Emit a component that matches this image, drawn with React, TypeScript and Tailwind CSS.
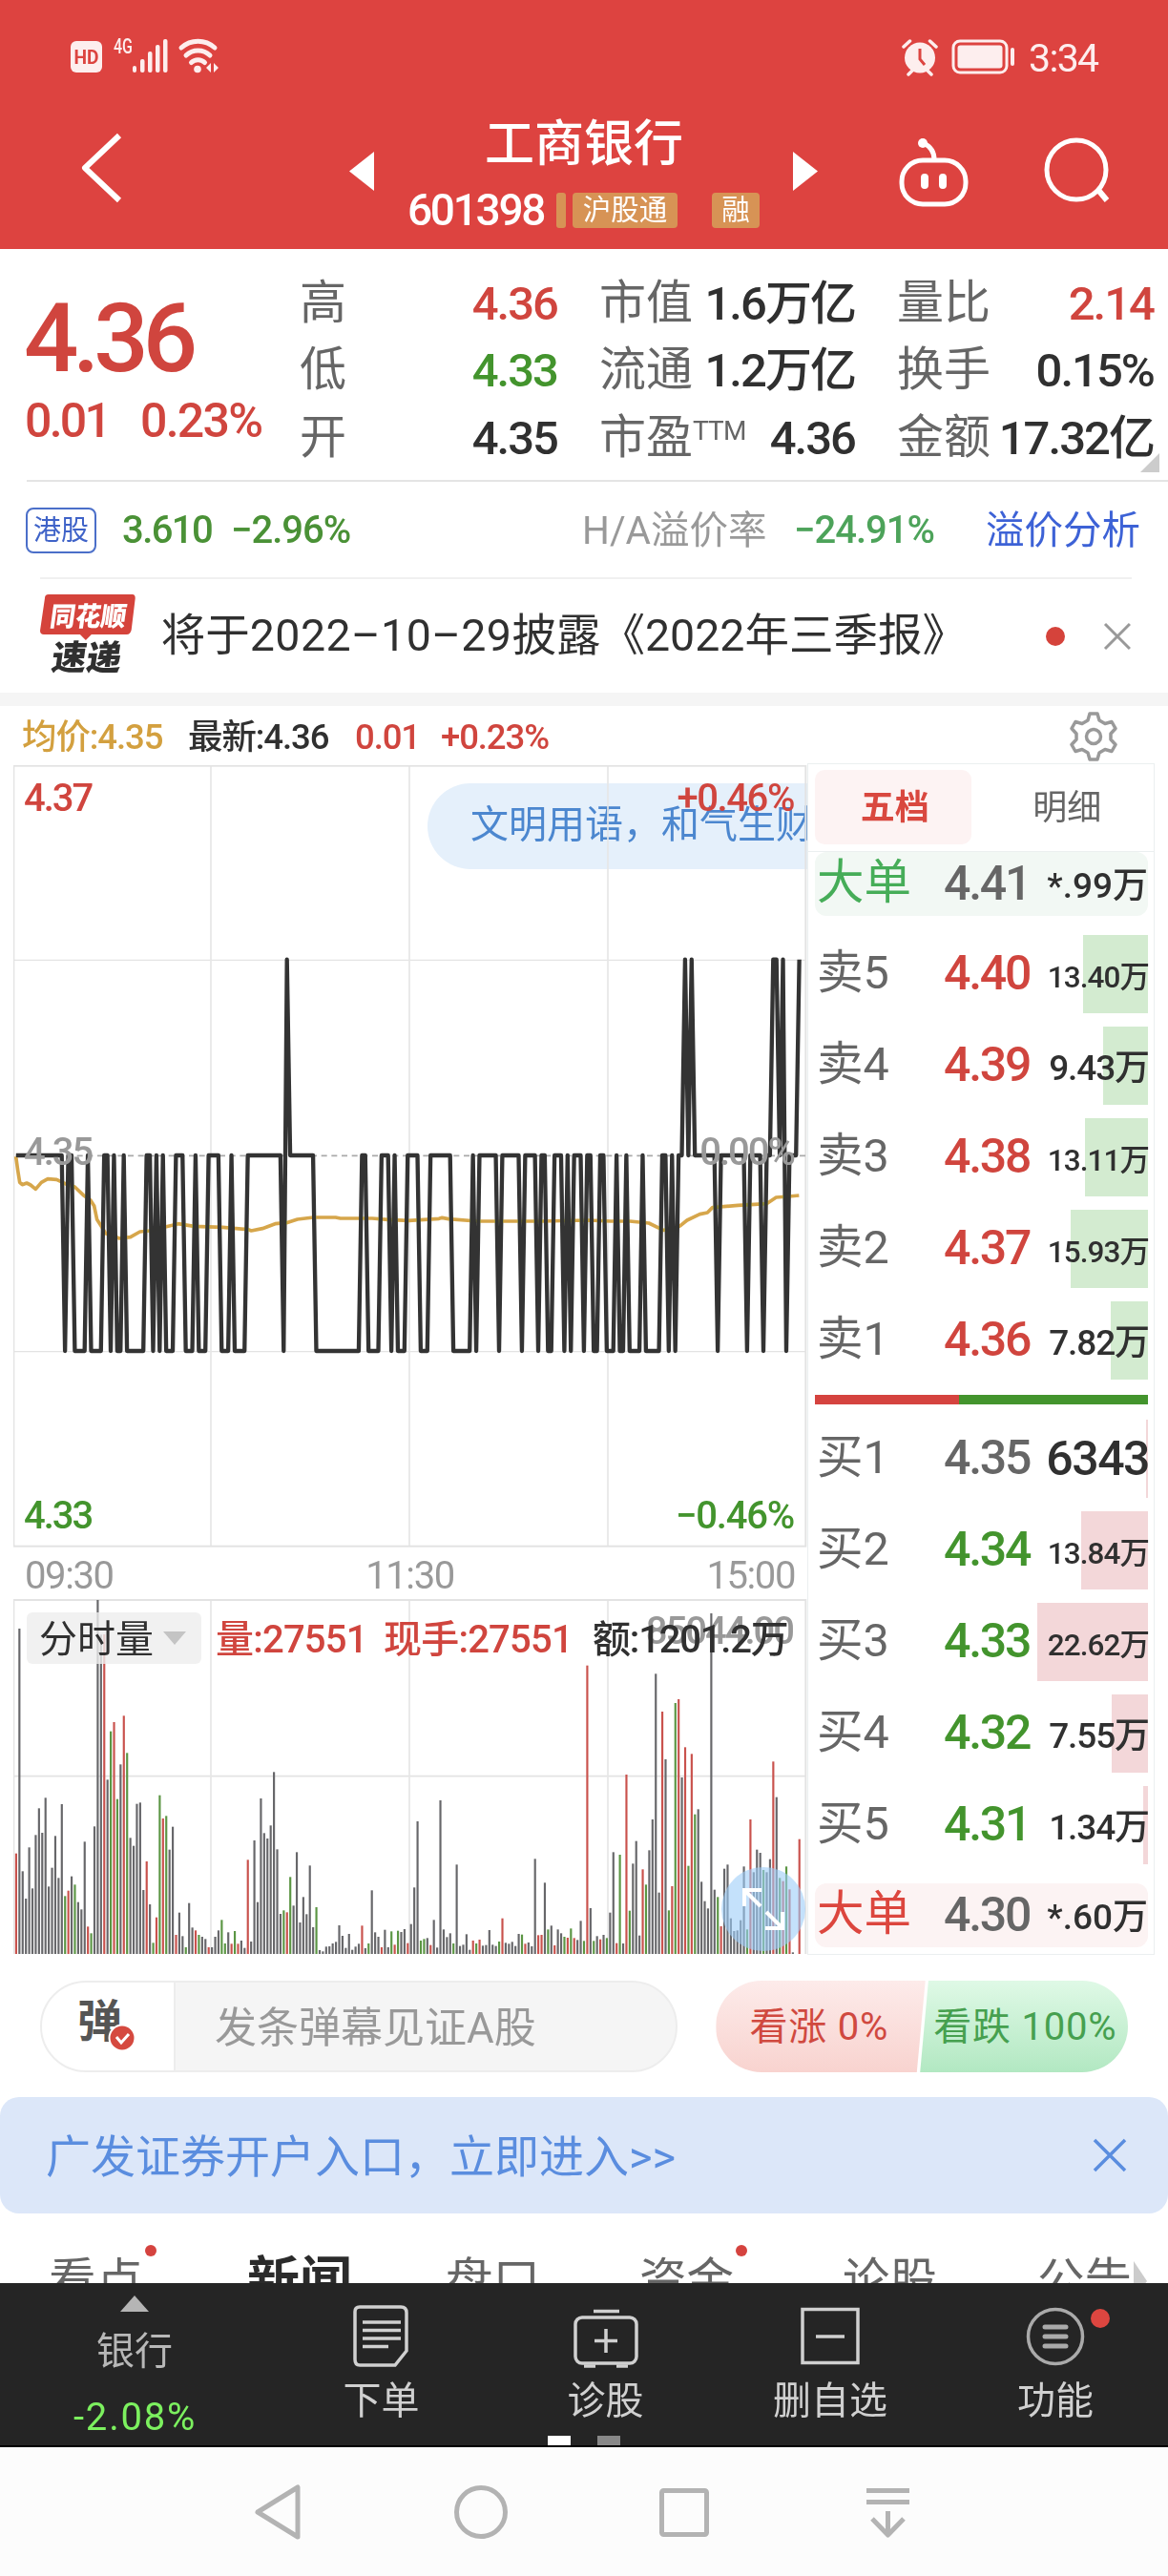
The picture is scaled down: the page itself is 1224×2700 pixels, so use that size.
import type { ReactNode } from 'react';
import clsx from 'clsx';

const RED = 'text-[#d0453e]';
const GREEN = 'text-[#43942d]';
const DARK = 'text-[#303030]';

type Stat = { label: string; sup?: string; value: string; color: string };

const STATS: Stat[][] = [
  [
    { label: '高', value: '4.36', color: RED },
    { label: '低', value: '4.33', color: GREEN },
    { label: '开', value: '4.35', color: DARK },
  ],
  [
    { label: '市值', value: '1.6万亿', color: DARK },
    { label: '流通', value: '1.2万亿', color: DARK },
    { label: '市盈', sup: 'TTM', value: '4.36', color: DARK },
  ],
  [
    { label: '量比', value: '2.14', color: RED },
    { label: '换手', value: '0.15%', color: DARK },
    { label: '金额', value: '17.32亿', color: DARK },
  ],
];

type Order = { label: string; price: string; amount: string; bar: number; color: string };

const SELLS: Order[] = [
  { label: '卖5', price: '4.40', amount: '13.40万', bar: 68, color: RED },
  { label: '卖4', price: '4.39', amount: '9.43万', bar: 47, color: RED },
  { label: '卖3', price: '4.38', amount: '13.11万', bar: 66, color: RED },
  { label: '卖2', price: '4.37', amount: '15.93万', bar: 81, color: RED },
  { label: '卖1', price: '4.36', amount: '7.82万', bar: 39, color: RED },
];

const BUYS: Order[] = [
  { label: '买1', price: '4.35', amount: '6343', bar: 2, color: 'text-[#666]' },
  { label: '买2', price: '4.34', amount: '13.84万', bar: 70, color: GREEN },
  { label: '买3', price: '4.33', amount: '22.62万', bar: 116, color: GREEN },
  { label: '买4', price: '4.32', amount: '7.55万', bar: 38, color: GREEN },
  { label: '买5', price: '4.31', amount: '1.34万', bar: 5, color: GREEN },
];

// price level and the number of minutes it was held: H 4.36, M 4.35, L 4.34
const PRICE_RUNS =
  'M15 L1 M2 L4 M1 L4 M2 L1 M1 L2 M1 L6 M2 L1 M1 L1 M1 L3 M3 L3 M1 L3 M4 L3 M1 L4 M11 L1 H1 M8 L14 M2 L4 M3 L1 M1 L3 ' +
  'M4 L3 M7 L6 M1 L1 M6 L1 M6 L1 M4 L1 M2 L2 M3 L1 M1 L1 M3 L1 M2 L2 M2 L3 M1 L2 M1 L4 M1 L5 M2 L1 M1 L1 M2 H1 M1 H1 ' +
  'M7 L1 M8 L1 M4 L1 M2 H2 M1 H1 L1 M3 H1';

const AVERAGE =
  '50,757 56,800 62,838 70,845 84,840 96,846 112,859 130,838 150,827 178,829 205,842 235,852 262,878 284,893 296,912 305,955 318,975 332,998 ' +
  '360,1008 375,1014 410,1010 440,993 470,990 520,978 560,968 610,976 700,979 780,986 790,990 825,983 865,968 905,964 935,954 985,948 1055,948 ' +
  '1070,951 1170,951 1220,955 1285,958 1380,952 1390,949 1410,953 1500,960 1700,960 1850,957 1920,960 1980,960 2040,966 2085,988 2120,985 ' +
  '2140,973 2160,957 2200,938 2224,933 2240,917 2320,910 2410,905 2440,885 2480,882 2512,879';

// one bar a minute: colour, then the top of the bar (804 is the base line)
const VOLUMES =
  'r488 k-219 k544 k630 k469 k598 k430 k346 k423 k313 k592 k533 k433 k565 k333 g622 r605 k560 g586 k641 k664 k451 r718 g739 k403 k-309 k-200 ' +
  'r-201 k256 g104 r75 g317 k208 r55 g172 k439 k464 k332 k328 k603 r513 k648 g769 r689 g305 r378 g370 k476 k404 r744 k674 k748 g783 k644 k721 ' +
  'r730 g744 k750 k757 r783 k783 k750 k730 g697 g771 k736 r772 g732 r772 k762 k785 r508 k765 k447 k641 k315 k424 k441 k400 k232 k475 k678 g667 ' +
  'r673 g562 k652 k484 k705 k625 k679 k526 k720 g657 k792 k796 k781 k780 k771 k766 k714 k747 k785 k741 k791 k781 k772 r715 k786 g771 k604 k736 ' +
  'k750 r783 k728 k783 g733 r775 g731 k735 k726 r770 k710 k595 k387 g762 g757 k754 r776 k697 k784 k321 k727 k751 k739 g771 k523 k779 k775 k742 ' +
  'k791 r762 g771 r759 k778 k776 k729 k775 k779 g765 r692 k769 k772 k766 k779 k741 g743 r772 k768 k780 k505 r745 r744 k580 g727 k715 r777 k727 ' +
  'k739 g750 r753 g724 r754 k760 k700 g763 r-103 k660 g763 k748 r758 k744 g754 k674 k484 r770 g492 k771 r240 g668 k520 k449 k746 r538 g586 k478 ' +
  'k381 k-77 k611 r42 k192 g667 r591 g15 r3 k249 r154 g527 r175 g365 k349 k577 k638 k661 k-267 k602 g625 r717 k536 k523 k692 k732 k730 k698 k529 ' +
  'g727 r381 k547 k476 k486 g540 k547 k506 r199 k311 g565 r575 g529 r601 k799 k804 r443';

const BAR_FILL: Record<string, string> = { r: '#c9524d', g: '#5b9644', k: '#67676a' };
const LEVEL: Record<string, number> = { H: 137, M: 753, L: 1368 };

const minuteX = (i: number) => 50.5 + i * 10.26;

const pricePoints = PRICE_RUNS.split(' ')
  .flatMap((run) => Array.from({ length: Number(run.slice(1)) }, () => LEVEL[run[0]]))
  .map((y, i) => `${minuteX(i).toFixed(1)},${y}`)
  .join(' ');

function StatusBar() {
  return (
    <div className="h-[120px] flex items-center justify-between pl-[74px] pr-[74px] text-[#fdeeee]">
      <svg width="160" height="44" viewBox="0 0 160 44" fill="currentColor" className="mt-[-1px]">
        <rect x="0" y="5" width="33" height="33" rx="6" />
        <text x="16.5" y="29" fontSize="20" fontWeight="700" textAnchor="middle" fill="#dc4440" fontFamily="Roboto" textLength="26" lengthAdjust="spacingAndGlyphs">HD</text>
        <text x="45" y="18" fontSize="22" fontWeight="500" fontFamily="Roboto" textLength="20" lengthAdjust="spacingAndGlyphs">4G</text>
        <rect x="65" y="31" width="4" height="7" rx="2" />
        <rect x="73" y="24" width="4.5" height="14" rx="2" />
        <rect x="81" y="16" width="4.5" height="22" rx="2" />
        <rect x="89" y="9" width="4.5" height="29" rx="2" />
        <rect x="97" y="3" width="4.5" height="35" rx="2" />
        <g fill="none" stroke="currentColor" strokeWidth="5" strokeLinecap="round">
          <path d="M116 12a26 26 0 0 1 35 0" />
          <path d="M121 20a18 18 0 0 1 25 0" />
          <path d="M126.500 27.500a10 10 0 0 1 14 0" />
        </g>
        <circle cx="133" cy="34.500" r="3.800" />
        <path d="M147 28v10l-5-5zM150 28v10l5-5z" />
      </svg>
      <div className="flex items-center">
        <svg width="38" height="40" viewBox="0 0 38 40" fill="none" stroke="currentColor">
          <circle cx="19" cy="20.500" r="16" fill="currentColor" stroke="none" />
          <path d="M2 9 8.500 3M36 9l-6.500-6M7 38l5-5M31 38l-5-5" strokeWidth="3.500" strokeLinecap="round" />
          <path d="M19 11v11l5 6" stroke="#dc4440" strokeWidth="3" />
        </svg>
        <svg width="68" height="38" viewBox="0 0 68 38" fill="none" stroke="currentColor" className="ml-3.5">
          <rect x="2" y="2" width="56" height="33" rx="7" strokeWidth="3" />
          <rect x="6.500" y="6.500" width="47" height="24" rx="3" fill="currentColor" stroke="none" />
          <path d="M64 11v15" strokeWidth="4" strokeLinecap="round" />
        </svg>
        <span className="ml-[13px] mt-0.5 text-[41px] leading-none tracking-[-0.04em] w-[72px] whitespace-nowrap">3:34</span>
      </div>
    </div>
  );
}

function Header() {
  return (
    <header className="h-[261px] bg-[#dd4340] text-white">
      <StatusBar />
      <div className="h-[141px] flex">
        <svg width="46" height="74" viewBox="0 0 46 74" fill="none" stroke="currentColor" strokeWidth="6" className="ml-[84px] mt-[19px]">
          <path d="M41 3 5 37l36 34" strokeLinejoin="round" />
        </svg>
        <svg width="28" height="42" viewBox="0 0 28 42" fill="currentColor" className="ml-[235px] mt-[39px]">
          <path d="M27 0v41L1 20.500z" />
        </svg>
        <div className="w-[438px] flex flex-col items-center">
          <h1 className="text-[52px] leading-[62px] font-medium mt-px">工商银行</h1>
          <div className="flex items-center mt-[15px] w-[370px]">
            <span className="text-[46px] leading-[44px] font-medium tracking-[-0.05em] w-[156px]">601398</span>
            <span className="w-2.5 h-[37px] rounded-[3px] bg-[#d79355]" />
            <span className="ml-[7px] w-[110px] h-[37px] rounded-[4px] bg-[#d79355] text-[29.500px] leading-[36px] text-center">沪股通</span>
            <span className="ml-9 w-[50px] h-[37px] rounded-[4px] bg-[#d79355] text-[29.500px] leading-[36px] text-center">融</span>
          </div>
        </div>
        <svg width="28" height="42" viewBox="0 0 28 42" fill="currentColor" className="mt-[39px]">
          <path d="M0 0v41l26-20.500z" />
        </svg>
        <svg width="76" height="76" viewBox="0 0 76 76" fill="none" stroke="currentColor" strokeWidth="5" className="ml-[82px] mt-[23px]">
          <rect x="4" y="25" width="67" height="46" rx="22" />
          <path d="M38 24c0-8-3-13-11-17" />
          <circle cx="26" cy="7" r="5" fill="currentColor" stroke="none" />
          <path d="M28 43v8M47 43v8" strokeWidth="8" strokeLinecap="round" />
        </svg>
        <svg width="72" height="72" viewBox="0 0 72 72" fill="none" stroke="currentColor" strokeWidth="5" className="ml-[76px] mt-[23px]">
          <circle cx="35" cy="35" r="31" />
          <path d="m57 55 10 12" strokeWidth="6" />
        </svg>
      </div>
    </header>
  );
}

function Quote() {
  return (
    <section className="h-[242px] flex pt-[21px] relative">
      <div className="w-[315px] pl-[25px] pt-[31px]">
        <div className={clsx('text-[101px] leading-[84px] font-medium tracking-[-0.06em]', RED)}>4.36</div>
        <div className={clsx('flex mt-[14px] text-[50px] leading-[60px] tracking-[-0.035em] font-medium pl-px', RED)}>
          <span className="w-[121px] tracking-[-0.055em]">0.01</span>
          <span>0.23%</span>
        </div>
      </div>
      <div className="flex gap-[43px]">
        {STATS.map((column, i) => (
          <div key={i} className={clsx('flex flex-col', i === 0 ? 'w-[271px]' : i === 1 ? 'w-[269px]' : 'w-[270px]')}>
            {column.map((stat) => (
              <div key={stat.label} className="h-[70.500px] flex items-center justify-between whitespace-nowrap">
                <span className="text-[49px] leading-none text-[#666] -ml-px">
                  {stat.label}
                  {stat.sup && <span className="text-[28px] align-[14px] tracking-[-0.03em]">{stat.sup}</span>}
                </span>
                <span className={clsx('text-[49px] leading-none font-medium tracking-[-0.04em] mr-0.5 pt-0.5', stat.color)}>{stat.value}</span>
              </div>
            ))}
          </div>
        ))}
      </div>
      <svg width="20" height="20" viewBox="0 0 20 20" className="absolute right-[9px] bottom-[8px]">
        <path d="M20 0v20H0z" fill="#ccc" />
      </svg>
    </section>
  );
}

function HkRow() {
  return (
    <div className="h-[102px] ml-7 border-t-2 border-[#e4e4e4] flex items-center text-[40px] leading-none whitespace-nowrap pt-0.5">
      <span className="w-[74px] h-[48px] border-2 border-[#4b6fc9] rounded-[8px] text-[29px] leading-[44px] text-center text-[#3f63c8] -ml-px">港股</span>
      <span className="ml-[27px] w-[114px] font-medium tracking-[-0.04em] text-[#4a9136]">3.610</span>
      <span className="w-[368px] font-medium tracking-[-0.025em] text-[#4a9136]">−2.96%</span>
      <span className="w-[222px] text-[40.500px] text-[#999]">H/A溢价率</span>
      <span className="w-[201px] font-medium tracking-[-0.025em] text-[#4da35a]">−24.91%</span>
      <span className="text-[40.500px] text-[#3d62d6]">溢价分析</span>
    </div>
  );
}

function NewsRow() {
  return (
    <div className="h-[121px] ml-[42px] mr-[38px] border-t-2 border-[#f0f0f0] flex items-center">
      <svg width="102" height="84" viewBox="0 0 102 84" className="-mt-1">
        <path d="M9 0h88q3 0 3 4l-4 33q-1 5-5 5H54l-6 6-6-6H4q-4 0-4-4L5 4q0-4 4-4z" fill="#d5433b" />
        <g transform="skewX(-8)" fontFamily="'Noto Sans CJK SC', sans-serif" fontWeight="900">
          <text x="14" y="33" fontSize="28" fill="#fff" textLength="80" lengthAdjust="spacingAndGlyphs">同花顺</text>
          <text x="22" y="79" fontSize="36" fill="#303030" textLength="73" lengthAdjust="spacingAndGlyphs">速递</text>
        </g>
      </svg>
      <span className={clsx('ml-[25px] text-[46.500px] leading-none whitespace-nowrap w-[926px]', DARK)}>
        将于<span className="tracking-[0.01em]">2022–10–29</span>披露《2022年三季报》
      </span>
      <span className="size-5 rounded-full bg-[#d5433b] ml-1" />
      <svg width="30" height="30" viewBox="0 0 30 30" stroke="#999" strokeWidth="3" className="ml-[40px]">
        <path d="m2 2 26 26M28 2 2 28" />
      </svg>
    </div>
  );
}

function ChartHeader() {
  return (
    <div className="h-[60px] flex items-center pl-[23px] pr-[52px] pt-1.5 text-[36.500px] leading-none tracking-[-0.03em] font-medium whitespace-nowrap">
      <span className="w-[174px] text-[#d3a03f]">均价:4.35</span>
      <span className={clsx('w-[175px]', DARK)}>最新:4.36</span>
      <span className={clsx('w-[90px]', RED)}>0.01</span>
      <span className={RED}>+0.23%</span>
      <svg width="52" height="52" viewBox="0 0 52 52" fill="none" stroke="#999" strokeWidth="3.500" strokeLinejoin="round" className="ml-auto -mt-0.5">
        <path d="M22 2h8l2 7 6 3.500 7-2 4 7-5 5.500v6l5 5.500-4 7-7-2-6 3.500-2 7h-8l-2-7-6-3.500-7 2-4-7 5-5.500v-6L3 17.500l4-7 7 2L20 9z" />
        <circle cx="26" cy="26" r="7.500" />
      </svg>
    </div>
  );
}

function PriceChart() {
  return (
    <div className="relative h-[820px] overflow-hidden text-[40px] leading-none font-medium tracking-[-0.05em]">
      <div className="absolute left-[434px] top-[19px] w-[420px] h-[90px] rounded-l-full bg-[#e5f0fb] pl-[45px] leading-[88px] whitespace-nowrap font-normal tracking-normal text-[#4c87cf]">
        文明用语，和气生财
      </div>
      <span className={clsx('absolute left-[11px] top-[15px]', RED)}>4.37</span>
      <span className={clsx('absolute right-[14px] top-[15px] tracking-[-0.035em]', RED)}>+0.46%</span>
      <svg width="832" height="820" viewBox="42 -474 2496 2460" className="absolute left-0 top-0" fill="none">
        <path d="M42 139h2493M42 1370h2493" stroke="#e3e3e3" strokeWidth="4" />
        <path d="M663-474V1983M1287-474V1983M1911-474V1983" stroke="#e6e6e6" strokeWidth="5" />
        <rect x="43" y="-472" width="2490" height="2454" stroke="#e3e3e3" strokeWidth="6" />
        <path d="M50 754h2484" stroke="#aaa" strokeWidth="5" strokeDasharray="18 14" />
        <polyline points={pricePoints} stroke="#333" strokeWidth="13" strokeLinejoin="round" />
        <polyline points={AVERAGE} stroke="#d09a32" strokeOpacity=".88" strokeWidth="11" strokeLinejoin="round" className="mix-blend-darken" />
      </svg>
      <span className="absolute left-[11px] top-[386px] text-[#999]">4.35</span>
      <span className="absolute right-[14px] top-[386px] text-[#999]">0.00%</span>
      <span className={clsx('absolute left-[11px] bottom-[13px]', GREEN)}>4.33</span>
      <span className={clsx('absolute right-[14px] bottom-[13px] tracking-[-0.03em]', GREEN)}>−0.46%</span>
    </div>
  );
}

function VolumeChart() {
  return (
    <div className="relative h-[372px] overflow-hidden text-[40px] leading-none">
      <svg width="832" height="372" viewBox="42 -312 2496 1116" className="absolute left-0 top-0" fill="none">
        <path d="M42 245h2493" stroke="#e3e3e3" strokeWidth="5" />
        <path d="M663-312V804M1287-312V804M1911-312V804" stroke="#e6e6e6" strokeWidth="5" />
        <path d="M43 804V-309H2533V804" stroke="#e3e3e3" strokeWidth="6" />
        {VOLUMES.split(' ').map((bar, i) => {
          const top = Number(bar.slice(1));
          return <rect key={i} x={minuteX(i) - 3} y={top} width="6.500" height={804 - top} fill={BAR_FILL[bar[0]]} />;
        })}
      </svg>
      <span className="absolute right-[15px] top-[14px] text-[#999] font-medium tracking-[-0.05em]">85044.00</span>
      <div className="absolute left-3.5 top-[14px] h-[54px] flex items-center whitespace-nowrap">
        <span className={clsx('w-[183px] h-[54px] rounded-[6px] bg-[#ededed]/80 flex items-center pl-[13px] pt-1', DARK)}>
          分时量
          <svg width="24" height="14" viewBox="0 0 24 14" className="ml-2.5 -mt-1">
            <path d="M0 0h24L12 14z" fill="#c4c4c4" />
          </svg>
        </span>
        <span className={clsx('ml-[15px] mt-1 w-[176px] font-medium tracking-[-0.02em]', RED)}>量:27551</span>
        <span className={clsx('w-[219px] mt-1 font-medium tracking-[-0.02em]', RED)}>现手:27551</span>
        <span className={clsx('mt-1 font-medium tracking-[-0.03em]', DARK)}>额:1201.2万</span>
      </div>
      <div className="absolute left-[742px] top-[281px] size-[88px] rounded-full bg-[#9dcdf8]/60 grid place-items-center">
        <svg width="46" height="46" viewBox="0 0 46 46" fill="none" stroke="#fff" strokeWidth="4">
          <path d="M3 20V3h18M3 3l17 17M43 26v17H25M43 43 26 26" />
        </svg>
      </div>
    </div>
  );
}

function OrderRow({ order, barColor }: { order: Order; barColor: string }) {
  // longer amounts are set smaller so that they fit the column
  const size = order.amount.length > 5 ? 'text-[31.500px] pt-2' : order.amount.includes('万') ? 'text-[37px] pt-1' : 'text-[50px]';
  return (
    <div className="relative h-[82px] flex items-center pl-0.5">
      <div className={clsx('absolute right-0 top-0 h-[82px]', barColor)} style={{ width: order.bar }} />
      <span className="relative w-[133px] pb-0.5 text-[48.500px] leading-none text-[#666]">{order.label}</span>
      <span className={clsx('relative pb-0.5 text-[50px] leading-none font-medium tracking-[-0.045em]', order.color)}>{order.price}</span>
      <span className={clsx('relative ml-auto mr-[-1px] leading-none font-medium tracking-[-0.03em]', DARK, size)}>{order.amount}</span>
    </div>
  );
}

function BigOrderRow({ price, amount, className }: { price: string; amount: string; className: string }) {
  return (
    <div className={clsx('h-[67px] flex items-center pl-0.5 pb-0.5 whitespace-nowrap', className)}>
      <span className="w-[133px] text-[49.500px] leading-none">大单</span>
      <span className="text-[50px] leading-none font-medium tracking-[-0.045em] text-[#666]">{price}</span>
      <span className={clsx('ml-auto text-[37px] leading-none pt-1.5 font-medium', DARK)}>{amount}</span>
    </div>
  );
}

function OrderBook() {
  return (
    <div className="w-[364px] h-[1249px] border border-[#ebeff0] bg-white pl-[7px] pr-[6px]">
      <div className="h-[91px] pt-1.5 flex text-[36px] text-center">
        <span className="w-[168px] h-[78px] leading-[81px] pl-1 rounded-[10px] bg-[#fdf3f3] font-bold text-[#d9483f]">五档</span>
        <span className="w-[190px] pl-4 leading-[81px] text-[#666]">明细</span>
      </div>
      <div className="border-t border-[#ebeff0] -ml-[7px] -mr-[6px] pl-[7px] pr-[6px]">
        <BigOrderRow price="4.41" amount="*.99万" className="rounded-[12px] bg-[#f2f8f4] text-[#46ad58]" />
      </div>
      <div className="mt-[20px] flex flex-col gap-3.5">
        {SELLS.map((order) => (
          <OrderRow key={order.label} order={order} barColor="bg-[#d3ebd0]" />
        ))}
      </div>
      <div className="mt-4 mb-4 h-2.5 flex">
        <div className="w-[151px] bg-[#d5433f]" />
        <div className="flex-1 bg-[#43942d]" />
      </div>
      <div className="flex flex-col gap-3.5">
        {BUYS.map((order) => (
          <OrderRow key={order.label} order={order} barColor="bg-[#f3d7d9]" />
        ))}
      </div>
      <BigOrderRow price="4.30" amount="*.60万" className="mt-5 rounded-[12px] bg-[#fcf3f3] text-[#dc463e]" />
    </div>
  );
}

function BarrageRow() {
  return (
    <div className="pt-[27px] px-[42px] h-[149px] flex text-[40px] whitespace-nowrap">
      <div className="w-[669px] h-[96px] rounded-full border-2 border-[#ededed] bg-[#f5f5f5] flex overflow-hidden">
        <div className="relative w-[140px] bg-white border-r-2 border-[#ededed] pl-[37px] text-[47px] leading-[82px] font-bold text-[#555]">
          弹
          <svg width="30" height="30" viewBox="0 0 30 30" className="absolute left-[69px] top-[43px]">
            <circle cx="15" cy="15" r="13.500" fill="#d5493f" stroke="#fff" strokeWidth="2" />
            <path d="m9 14 5 6 8-9" fill="none" stroke="#fff" strokeWidth="3" />
          </svg>
        </div>
        <span className="pl-[41px] text-[44px] leading-[96px] text-[#999]">发条弹幕见证A股</span>
      </div>
      <div className="ml-10 w-[432px] h-[96px] rounded-full overflow-hidden flex leading-[98px]">
        <span className="w-[224px] pl-[35px] bg-linear-to-b from-[#fdebea] to-[#f8d3cf] text-[#d0493f] [clip-path:polygon(0_0,98%_0,94%_100%,0_100%)] tracking-[0.02em]">看涨 0%</span>
        <span className="w-[218px] -ml-[10px] pl-[14px] bg-linear-to-b from-[#dff9e6] to-[#b2e8c2] text-[#46a04f] [clip-path:polygon(4%_0,100%_0,100%_100%,0_100%)] tracking-[0.02em]">看跌 100%</span>
      </div>
    </div>
  );
}

function TabStrip() {
  const tabs = [
    { label: '看点', className: 'w-[208px]', dot: true },
    { label: '新闻', className: 'w-[208px] text-[55px] font-bold text-[#2b2b2b]' },
    { label: '盘口', className: 'w-[203px]' },
    { label: '资金', className: 'w-[213px]', dot: true },
    { label: '论股', className: 'w-[204px]' },
    { label: '公告', className: 'w-[99px]' },
  ];
  return (
    <div className="h-[73px] overflow-hidden flex items-start pl-[51px] pt-[34px] text-[49.500px] leading-[74px] text-[#666] whitespace-nowrap">
      {tabs.map((tab) => (
        <span key={tab.label} className={clsx('relative', tab.className)}>
          {tab.label}
          {tab.dot && <span className="absolute left-[101px] -top-[1px] size-3 rounded-full bg-[#d5433f]" />}
        </span>
      ))}
      <svg width="16" height="44" viewBox="0 0 16 44" className="mt-3">
        <path d="M2 4v40L16 25z" fill="#ccc" />
      </svg>
    </div>
  );
}

function Tool({ label, className, children }: { label: string; className: string; children: ReactNode }) {
  return (
    <div className={clsx('relative flex flex-col items-center', className)}>
      <svg width="70" height="68" viewBox="0 0 70 68" fill="none" stroke="#d0d0d0" strokeWidth="3.500" className="mt-[22px]">
        {children}
      </svg>
      <span className="mt-[13px] text-[40px] leading-[42px] text-[#d0d0d0]">{label}</span>
    </div>
  );
}

function Toolbar() {
  return (
    <div className="relative h-[172px] bg-[#252525] border-b-2 border-black flex">
      <div className="w-[282px] flex flex-col items-start text-[40px] whitespace-nowrap">
        <svg width="30" height="17" viewBox="0 0 30 17" className="mt-[13px] ml-[126px]">
          <path d="M15 0 30 17H0z" fill="#b5b5b5" />
        </svg>
        <span className="mt-[21px] ml-[101px] leading-[42px] text-[#b8b8b8]">银行</span>
        <span className="mt-[28px] ml-[77px] leading-[40px] tracking-[0.045em] text-[#7cf05f]">-2.08%</span>
      </div>
      <Tool label="下单" className="w-[235px]">
        <path d="M12 3h43q6 0 6 6v40L49 64H12q-5 0-5-6V8q0-5 5-5z" />
        <path d="M15 19h40M15 27.500h40M15 36h40M15 44.500h27" />
      </Tool>
      <Tool label="诊股" className="w-[235px]">
        <path d="M22 7.500h27M35 26v25M23 38.500h24" />
        <rect x="3" y="14" width="64" height="48" rx="7" />
        <path d="M12 65h12M46 65h12" />
      </Tool>
      <Tool label="删自选" className="w-[236px]">
        <rect x="6" y="5.500" width="58" height="56" />
        <path d="M20 34h30" />
      </Tool>
      <Tool label="功能" className="w-[236px]">
        <circle cx="35" cy="34" r="28.500" stroke="#aaa" />
        <path d="M24 24h22M24 34h22M24 44h22" stroke="#aaa" strokeWidth="5" strokeLinecap="round" />
      </Tool>
      <span className="absolute left-[1143px] top-[27px] size-5 rounded-full bg-[#dd4640]" />
      <div className="absolute left-[574px] bottom-0 flex gap-7">
        <span className="w-6 h-2.5 bg-white" />
        <span className="w-6 h-2.5 bg-[#888]" />
      </div>
    </div>
  );
}

function SystemNav() {
  return (
    <nav className="h-[135px] bg-[#fcfcfc] flex pt-[36px]">
      <svg width="700" height="66" viewBox="0 0 700 66" fill="none" stroke="#b3b3b3" strokeWidth="5" strokeLinejoin="round" className="ml-[264px]">
        <path d="M48 6v52L6 32z" />
        <circle cx="240" cy="32" r="25.500" />
        <rect x="429.500" y="9.500" width="47" height="46" rx="2" />
        <path d="M644 9.500h45M644 21.500h45M666.500 31v24M650 39l16.500 17L683 39" />
      </svg>
    </nav>
  );
}

export default function App() {
  return (
    <div className="w-[1224px] h-[2700px] overflow-hidden bg-white font-['Roboto','Noto_Sans_CJK_SC',sans-serif]">
      <Header />
      <Quote />
      <HkRow />
      <NewsRow />
      <div className="h-3.5 bg-[#f5f5f5]" />
      <ChartHeader />
      <div className="flex">
        <div className="w-[832px] ml-3.5 pt-0.5">
          <PriceChart />
          <div className="h-[54px] flex items-center justify-between pl-3 pr-[13px] text-[40px] leading-none tracking-[-0.035em] text-[#999] pt-1.5">
            <span>09:30</span>
            <span>11:30</span>
            <span>15:00</span>
          </div>
          <VolumeChart />
        </div>
        <OrderBook />
      </div>
      <BarrageRow />
      <div className="h-[122px] rounded-[20px] bg-[#dce7f9] flex items-center justify-between pl-12 pr-[42px] pt-1 text-[47px] text-[#5a8ddf]">
        <span>广发证券开户入口，立即进入&gt;&gt;</span>
        <svg width="38" height="38" viewBox="0 0 38 38" stroke="#5a8ddf" strokeWidth="3.500" className="-mt-1">
          <path d="m3 3 32 32M35 3 3 35" />
        </svg>
      </div>
      <TabStrip />
      <Toolbar />
      <SystemNav />
    </div>
  );
}
